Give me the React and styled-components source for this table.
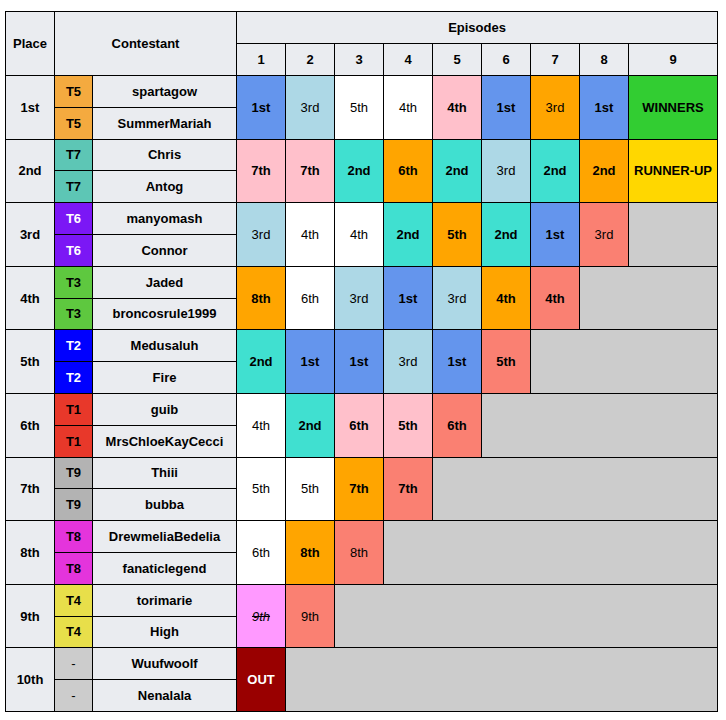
import React from "react"
import styled, { createGlobalStyle } from "styled-components"

const GlobalStyle = createGlobalStyle`
  body {
    margin: 0;
    background: #ffffff;
    font-family: "Liberation Sans", Arial, sans-serif;
  }
`

const COLORS = {
  first: "#6495ed",
  second: "#40e0d0",
  third: "#add8e6",
  pink: "#ffc0cb",
  orange: "#ffa500",
  salmon: "#fa8072",
  white: "#ffffff",
  win: "#32cd32",
  runner: "#ffd700",
  elim: "#ff99ff",
  out: "#990000",
  none: "#cccccc",
}

const teams = [
  { place: "1st", team: "T5", color: "#f4aa3f", names: ["spartagow", "SummerMariah"] },
  { place: "2nd", team: "T7", color: "#5dc6b5", names: ["Chris", "Antog"] },
  { place: "3rd", team: "T6", color: "#7b17f5", light: true, names: ["manyomash", "Connor"] },
  { place: "4th", team: "T3", color: "#5ec83f", names: ["Jaded", "broncosrule1999"] },
  { place: "5th", team: "T2", color: "#0000ff", light: true, names: ["Medusaluh", "Fire"] },
  { place: "6th", team: "T1", color: "#e8382a", names: ["guib", "MrsChloeKayCecci"] },
  { place: "7th", team: "T9", color: "#b3b3b3", names: ["Thiii", "bubba"] },
  { place: "8th", team: "T8", color: "#e434dc", names: ["DrewmeliaBedelia", "fanaticlegend"] },
  { place: "9th", team: "T4", color: "#e8df4a", names: ["torimarie", "High"] },
  { place: "10th", team: "-", color: "#cccccc", names: ["Wuufwoolf", "Nenalala"] },
]

// [text, colour key, regular weight?]
const results = [
  [["1st", "first"], ["3rd", "third", 1], ["5th", "white", 1], ["4th", "white", 1], ["4th", "pink"], ["1st", "first"], ["3rd", "orange", 1], ["1st", "first"], ["WINNERS", "win"]],
  [["7th", "pink"], ["7th", "pink"], ["2nd", "second"], ["6th", "orange"], ["2nd", "second"], ["3rd", "third", 1], ["2nd", "second"], ["2nd", "orange"], ["RUNNER-UP", "runner"]],
  [["3rd", "third", 1], ["4th", "white", 1], ["4th", "white", 1], ["2nd", "second"], ["5th", "orange"], ["2nd", "second"], ["1st", "first"], ["3rd", "salmon", 1]],
  [["8th", "orange"], ["6th", "white", 1], ["3rd", "third", 1], ["1st", "first"], ["3rd", "third", 1], ["4th", "orange"], ["4th", "salmon"]],
  [["2nd", "second"], ["1st", "first"], ["1st", "first"], ["3rd", "third", 1], ["1st", "first"], ["5th", "salmon"]],
  [["4th", "white", 1], ["2nd", "second"], ["6th", "pink"], ["5th", "pink"], ["6th", "salmon"]],
  [["5th", "white", 1], ["5th", "white", 1], ["7th", "orange"], ["7th", "salmon"]],
  [["6th", "white", 1], ["8th", "orange"], ["8th", "salmon", 1]],
  [["9th", "elim", 1], ["9th", "salmon", 1]],
  [["OUT", "out"]],
]

const Page = styled.div`
  padding: 11px 0 0 5px;
`

const Table = styled.table`
  border-collapse: collapse;
  table-layout: fixed;
  width: 713px;
  font-size: 13px;
  color: #000000;
  text-align: center;
`

const Head = styled.th`
  background: #eaecf0;
  border: 1px solid #000000;
  font-weight: bold;
  padding: 0;
  height: 31px;
`

const Row = styled.tr`
  height: 31.8px;
`

const Cell = styled.td`
  border: 1px solid #000000;
  padding: 0;
  background: ${(p) => p.$bg || "#eaecf0"};
  color: ${(p) => (p.$light ? "#ffffff" : "#000000")};
  font-weight: ${(p) => (p.$regular ? "normal" : "bold")};
  font-style: ${(p) => (p.$struck ? "italic" : "normal")};
  text-decoration: ${(p) => (p.$struck ? "line-through" : "none")};
`

const EpisodeCells = ({ list }) => {
  const cells = list.map(([text, key, regular], i) => (
    <Cell
      key={i}
      rowSpan={2}
      $bg={COLORS[key]}
      $regular={!!regular}
      $light={key === "out"}
      $struck={key === "elim"}
    >
      {text}
    </Cell>
  ))
  if (list.length < 9) {
    cells.push(<Cell key="rest" rowSpan={2} colSpan={9 - list.length} $bg={COLORS.none} />)
  }
  return cells
}

export default function App() {
  return (
    <Page>
      <GlobalStyle />
      <Table>
        <colgroup>
          <col style={{ width: 49 }} />
          <col style={{ width: 38 }} />
          <col style={{ width: 144 }} />
          {[1, 2, 3, 4, 5, 6, 7, 8].map((n) => (
            <col key={n} style={{ width: 49 }} />
          ))}
          <col style={{ width: 89 }} />
        </colgroup>
        <thead>
          <tr>
            <Head rowSpan={2}>Place</Head>
            <Head rowSpan={2} colSpan={2}>Contestant</Head>
            <Head colSpan={9}>Episodes</Head>
          </tr>
          <tr>
            {[1, 2, 3, 4, 5, 6, 7, 8, 9].map((n) => (
              <Head key={n}>{n}</Head>
            ))}
          </tr>
        </thead>
        <tbody>
          {teams.map((t, i) => (
            <React.Fragment key={t.place}>
              <Row>
                <Cell rowSpan={2}>{t.place}</Cell>
                <Cell $bg={t.color} $light={t.light} $regular={t.team === "-"}>{t.team}</Cell>
                <Cell>{t.names[0]}</Cell>
                <EpisodeCells list={results[i]} />
              </Row>
              <Row>
                <Cell $bg={t.color} $light={t.light} $regular={t.team === "-"}>{t.team}</Cell>
                <Cell>{t.names[1]}</Cell>
              </Row>
            </React.Fragment>
          ))}
        </tbody>
      </Table>
    </Page>
  )
}
